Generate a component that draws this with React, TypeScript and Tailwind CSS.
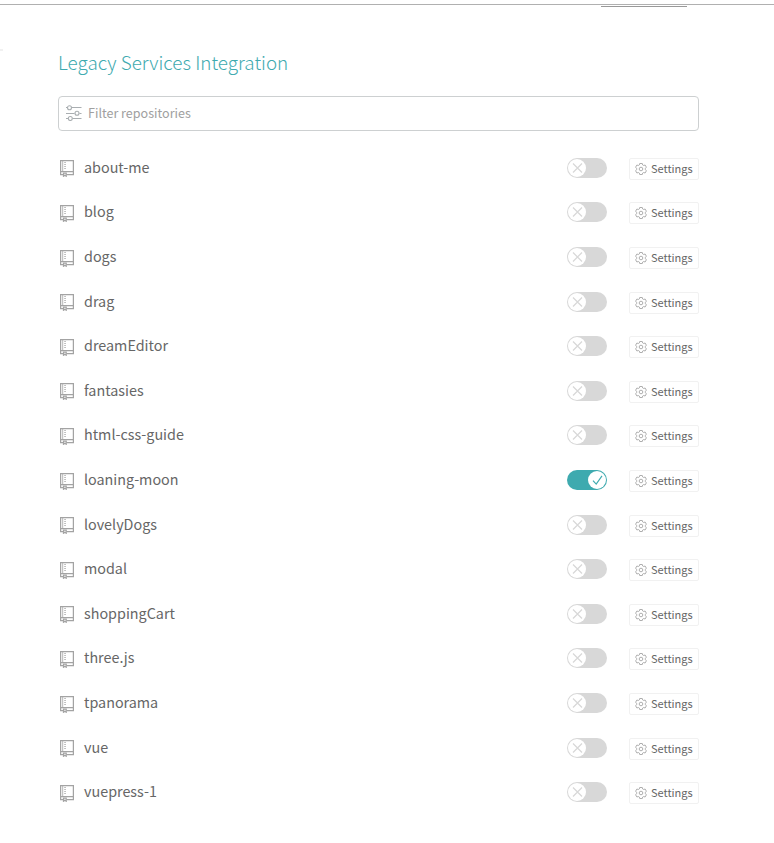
const repositories = [
  'about-me', 'blog', 'dogs', 'drag', 'dreamEditor', 'fantasies', 'html-css-guide', 'loaning-moon',
  'lovelyDogs', 'modal', 'shoppingCart', 'three.js', 'tpanorama', 'vue', 'vuepress-1',
];

function FilterIcon() {
  return (
    <svg className="-mt-px h-4 w-4 shrink-0" viewBox="0 0 16 16" fill="none" stroke="#a9aeb1" strokeWidth="1.1">
      <path d="M0 2.500h1.500M5.500 2.500H15.500M0 8.500h8.500M13.500 8.500h2M0 13.500h2M6.500 13.500h9" />
      <circle cx="3.500" cy="2.700" r="2" />
      <circle cx="11" cy="8.200" r="2" />
      <circle cx="4.300" cy="13.500" r="2" />
    </svg>
  );
}

function RepoIcon() {
  return (
    <svg className="h-[17px] w-[14px] shrink-0" viewBox="0 0 14 17" fill="none" stroke="#a3a3a3" strokeWidth="1.250">
      <path d="M3 14.500H.600V.600h12.800v13.900H6.500M.600 11.500h12.800" />
      <path d="M2.700 .600v11" strokeWidth=".8" />
      <path d="M4.400 2.500h1.300M4.400 4.500h1.300M4.400 6.500h1.300M4.400 8.500h1.300" strokeWidth="1" />
      <path d="M3.500 13.200h2.700v3l-1.350-1-1.350 1z" />
    </svg>
  );
}

function GearIcon() {
  return (
    <svg className="h-3 w-3 shrink-0" viewBox="0 0 12 12" fill="none" stroke="#a6a6a6" strokeWidth=".9" strokeLinejoin="round">
      <path d="M4.700.5h2.600l.4 1.500.9.5 1.500-.5 1.300 2.200-1 1.100v1.400l1 1.100-1.300 2.200-1.500-.5-.9.5-.4 1.500H4.700L4.300 10l-.9-.5-1.500.5L.6 7.800l1-1.100V5.300l-1-1.100L1.900 2l1.500.5.9-.5z" />
      <circle cx="6" cy="6" r="1.800" />
    </svg>
  );
}

function Toggle({ on }: { on: boolean }) {
  return (
    <button
      aria-pressed={on}
      className={`flex h-5 w-10 shrink-0 items-center rounded-full px-px ${on ? 'justify-end bg-[#3eaaaf]' : 'justify-start bg-[#d8d8d8]'}`}
    >
      <svg className="h-[18px] w-[18px]" viewBox="0 0 18 18" fill="none">
        <circle cx="9" cy="9" r="9" fill="white" />
        {on ? (
          <path d="M5 9.700l3.200 3.500 5.800-8.400" stroke="#3eaaaf" strokeWidth="1.150" />
        ) : (
          <path d="M5 4.500l9 9M14 4.500l-9 9" stroke="#d8d8d8" strokeWidth="1.250" />
        )}
      </svg>
    </button>
  );
}

export default function App() {
  return (
    <div className="h-[843px] w-[774px] overflow-hidden bg-white font-['Noto_Sans_CJK_SC',sans-serif] text-[#666]">
      <header className="h-[48px] pt-1">
        <div className="h-px bg-[#b0b0b0]" />
        <div className="mt-px ml-[601px] h-px w-[86px] bg-[#999]" />
      </header>
      <div className="flex">
        <div className="mt-px h-[2px] w-[3px] bg-[#f1f1f1]" />
        <main className="ml-[55px] w-[641px]">
          <h1 className="h-12 text-[18.850px] leading-[28px] font-light text-[#3eaaaf]">
            Legacy Services Integration
          </h1>
          <label className="flex h-[35px] items-center gap-[6px] rounded-[4px] border border-[#cdd0d1] pl-[7px]">
            <FilterIcon />
            <input
              className="min-w-0 flex-1 bg-transparent pb-[2px] text-[12.550px] leading-5 outline-none placeholder:text-[#a0a0a0]"
              placeholder="Filter repositories"
            />
          </label>
          <ul className="pt-[14.800px]">
            {repositories.map((name) => (
              <li key={name} className="flex h-[44.600px] items-start pt-3 pl-[2px]">
                <div className="flex flex-1 items-start gap-[10px]">
                  <div className="pt-[2.600px]"><RepoIcon /></div>
                  <span className="text-[14.350px] leading-[18px]">{name}</span>
                </div>
                <Toggle on={name === 'loaning-moon'} />
                <button className="ml-[22px] flex h-[22px] w-[70px] items-center gap-1 rounded-[2px] border border-[#f1f1f1] pl-[5px] text-[11px] leading-[18px]">
                  <GearIcon />
                  <span className="pb-[2px]">Settings</span>
                </button>
              </li>
            ))}
          </ul>
        </main>
      </div>
    </div>
  );
}
